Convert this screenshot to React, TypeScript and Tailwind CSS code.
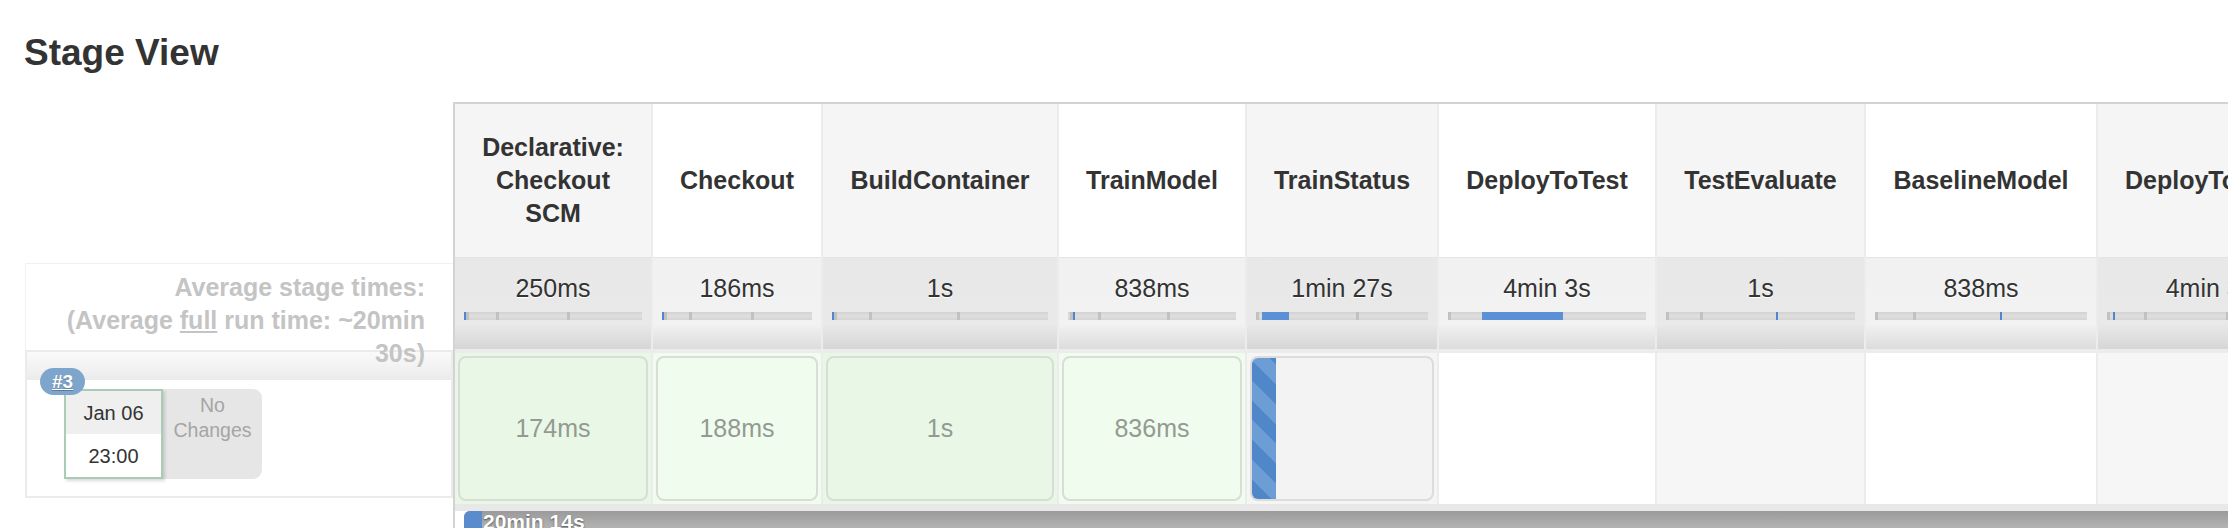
type Stage = {
  name: string;
  width: number;
  avg: string;
  marks: number[];
  blue?: [number, number];
  tick?: number;
  run?: string;
  state: 'ok' | 'running' | 'none';
};

const stages: Stage[] = [
  { name: 'Declarative: Checkout SCM', width: 196, avg: '250ms', marks: [1, 18, 58], tick: 0, run: '174ms', state: 'ok' },
  { name: 'Checkout', width: 168, avg: '186ms', marks: [1, 18, 59], tick: 0, run: '188ms', state: 'ok' },
  { name: 'BuildContainer', width: 234, avg: '1s', marks: [1, 17, 58], tick: 0, run: '1s', state: 'ok' },
  { name: 'TrainModel', width: 186, avg: '838ms', marks: [1, 18, 59], tick: 3, run: '836ms', state: 'ok' },
  { name: 'TrainStatus', width: 190, avg: '1min 27s', marks: [0, 58], blue: [3.5, 19], state: 'running' },
  { name: 'DeployToTest', width: 216, avg: '4min 3s', marks: [0], blue: [17, 58], state: 'none' },
  { name: 'TestEvaluate', width: 207, avg: '1s', marks: [0, 18], tick: 58, state: 'none' },
  { name: 'BaselineModel', width: 230, avg: '838ms', marks: [0, 18], tick: 59, state: 'none' },
  { name: 'DeployToProd', width: 223, avg: '4min 3s', marks: [0, 18, 58], tick: 3, state: 'none' },
];

function AvgBar({ stage }: { stage: Stage }) {
  return (
    <div className="relative mx-[9px] mt-[9px] h-[8px] bg-[linear-gradient(to_bottom,#d2d2d2,#dfdfdf_50%,#d4d4d4)]">
      {stage.marks.map((m) => (
        <div key={m} className="absolute top-0 h-full w-[3px] bg-[#c1c1c1]" style={{ left: `${m}%` }} />
      ))}
      {stage.blue && (
        <div
          className="absolute top-0 h-full bg-[#5b8fd6]"
          style={{ left: `${stage.blue[0]}%`, width: `${stage.blue[1] - stage.blue[0]}%` }}
        />
      )}
      {stage.tick !== undefined && (
        <div className="absolute top-0 h-full w-[2px] bg-[#4f86d0]" style={{ left: `${stage.tick}%` }} />
      )}
    </div>
  );
}

function RunCell({ stage, odd }: { stage: Stage; odd: boolean }) {
  if (stage.state === 'ok') {
    return (
      <div className={`mt-[4px] h-[151px] p-[3px] ${odd ? 'bg-[#e9f7e6]' : 'bg-[#f0fdee]'}`}>
        <div
          className={`flex h-full items-center justify-center rounded-[8px] border-2 border-[#d8ddd6] text-[25px] text-[#939a92] ${
            odd ? 'bg-[#e9f7e6]' : 'bg-[#f0fdee]'
          }`}
        >
          {stage.run}
        </div>
      </div>
    );
  }
  if (stage.state === 'running') {
    return (
      <div className="mt-[4px] h-[151px] bg-[#f5f5f5] p-[3px]">
        <div className="flex h-full overflow-hidden rounded-[8px] border-2 border-[#dcdcdc] bg-[#f3f3f3]">
          <div className="w-[24px] bg-[repeating-linear-gradient(45deg,#4f87c8_0px,#4f87c8_14px,#6c9dd5_14px,#6c9dd5_28px)]" />
        </div>
      </div>
    );
  }
  return <div className={`mt-[4px] h-[151px] ${odd ? 'bg-[#f6f6f6]' : 'bg-white'}`} />;
}

function StageColumn({ stage, index }: { stage: Stage; index: number }) {
  const odd = index % 2 === 0;
  return (
    <div className="flex shrink-0 flex-col" style={{ width: stage.width }}>
      <div
        className={`flex h-[154px] items-center justify-center border-b border-[#e4e4e4] px-[24px] text-center text-[25px] font-bold leading-[33px] text-[#333] ${
          odd ? 'bg-[#f5f5f5]' : 'bg-white'
        }`}
      >
        {stage.name}
      </div>
      <div
        className={`h-[91px] pt-[15px] text-center text-[25px] leading-[30px] text-[#333] [text-shadow:0_1px_0_#fff] ${
          odd
            ? 'bg-[linear-gradient(to_bottom,#e8e8e8,#e9e9e9_72%,#d6d6d6)]'
            : 'bg-[linear-gradient(to_bottom,#f1f1f1,#f2f2f2_72%,#dcdcdc)]'
        }`}
      >
        <div className="whitespace-nowrap">{stage.avg}</div>
        <AvgBar stage={stage} />
      </div>
      <RunCell stage={stage} odd={odd} />
    </div>
  );
}

export default function App() {
  return (
    <div className="h-[528px] w-full overflow-hidden bg-white font-['Liberation_Sans',Arial,sans-serif]">
      <h1 className="pl-[24px] pt-[34px] text-[37px] font-bold leading-[37px] text-[#333]">Stage View</h1>

      <div className="mt-[31px] flex items-start">
        {/* left: averages + build history */}
        <div className="ml-[25px] w-[428px] shrink-0 pt-[161px]">
          <div className="relative z-10 h-[87px] border-l border-t border-[#f1f1f1] pr-[28px] pt-[7px] text-right text-[25px] font-bold leading-[33px] text-[#c4c4c4]">
            Average stage times:
            <br />
            (Average <span className="underline">full</span> run time: ~20min
            <br />
            30s)
          </div>
          <div className="relative h-[148px] border-2 border-[#ebebeb] bg-white">
            <div className="h-[28px] bg-[linear-gradient(to_bottom,#fafafa,#ebebeb)]" />
            <div className="absolute left-[13px] top-[16px] z-20 rounded-full bg-[#7ea5cb] px-[12px] text-[19px] font-bold leading-[27px] text-white underline [text-shadow:0_1px_1px_rgba(0,0,0,0.25)]">
              #3
            </div>
            <div className="ml-[37px] mt-[9px] flex">
              <div className="relative z-10 flex h-[90px] w-[99px] flex-col border-2 border-[#a8ccb5] bg-white text-[20px] text-[#333] shadow-[2px_2px_3px_rgba(0,0,0,0.15)]">
                <div className="flex h-[43px] items-center justify-center bg-[#efefef]">Jan 06</div>
                <div className="flex flex-1 items-center justify-center">23:00</div>
              </div>
              <div className="h-[90px] w-[99px] rounded-r-[9px] bg-[#e6e6e6] pt-[4px] text-center text-[19.5px] leading-[25px] text-[#a5a5a5]">
                No
                <br />
                Changes
              </div>
            </div>
          </div>
        </div>

        {/* stage table */}
        <div className="min-w-0 flex-1 overflow-hidden border-l-2 border-t-2 border-[#d3d3d3]">
          <div className="flex gap-[2px] bg-[#ececec]">
            {stages.map((s, i) => (
              <StageColumn key={s.name} stage={s} index={i} />
            ))}
          </div>
          <div className="h-[7px] bg-[#e8e8e8]" />
          <div className="ml-[9px] flex h-[30px] rounded-tl-[6px] bg-[linear-gradient(to_bottom,#9a9a9a,#c6c6c6)]">
            <div className="h-full w-[18px] rounded-tl-[6px] bg-[#5a8bcc]" />
            <div className="pl-[1px] text-[21px] font-bold leading-[21px] text-white [text-shadow:0_1px_2px_rgba(0,0,0,0.55)]">
              20min 14s
            </div>
          </div>
        </div>
      </div>
    </div>
  );
}
